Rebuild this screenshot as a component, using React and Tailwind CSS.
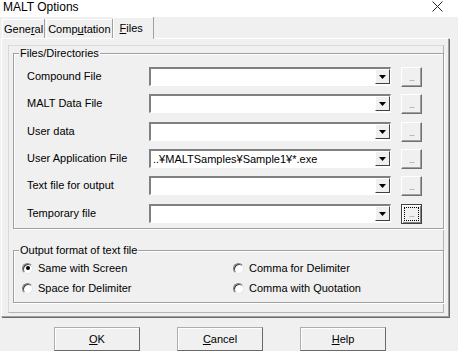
import React from 'react';

const FONT = { fontFamily: '"Liberation Sans", Arial, sans-serif' };

const ROWS = [
    { label: 'Compound File', value: '', mt: 'mt-0' },
    { label: 'MALT Data File', value: '', mt: 'mt-[8px]' },
    { label: 'User data', value: '', mt: 'mt-[9px]' },
    { label: 'User Application File', value: '..¥MALTSamples¥Sample1¥*.exe', mt: 'mt-[8px]' },
    { label: 'Text file for output', value: '', mt: 'mt-[8px]' },
    { label: 'Temporary file', value: '', mt: 'mt-[9px]', focus: true },
];

const Tab = ({ children, active, className = '' }) => (
    <div
        className={`relative flex items-center border-l border-t border-white shadow-[1px_0_0_#a0a0a0] ${
            active ? 'h-[22px] mb-[-1px] bg-[#f0f0f0] z-10 pl-[6px] pr-[10px]' : 'h-[19px] px-[1px]'
        } ${className}`}
    >
        {children}
    </div>
);

const Combo = ({ value }) => (
    <div className="w-[242px] h-[19px] flex border-t-2 border-l-2 border-t-[#808080] border-l-[#808080] border-b border-r border-b-white border-r-white bg-white">
        <div className="flex-1 pl-[2px] text-[11px] leading-[16px] text-black truncate">{value}</div>
        <div className="w-[15px] h-[15px] bg-[#f0f0f0] border-t border-l border-t-white border-l-white border-b border-r border-b-[#404040] border-r-[#404040] flex items-center justify-center">
            <svg width="7" height="4" viewBox="0 0 7 4"><path d="M0 0h7L3.5 4z" fill="#000" /></svg>
        </div>
    </div>
);

const Browse = ({ focus }) => (
    <div
        className={`w-[21px] h-[20px] flex items-center justify-center bg-[#f0f0f0] border ${
            focus ? 'border-[#404040] shadow-[inset_1px_1px_0_#fff,inset_-1px_-1px_0_#808080]' : 'border-t-white border-l-white border-b-[#707070] border-r-[#707070] shadow-[inset_-1px_-1px_0_#a0a0a0]'
        }`}
    >
        <div className={`w-[15px] h-[14px] flex items-end justify-center pb-[3px] ${focus ? 'border border-dotted border-black' : ''}`}>
            <span className="text-[8px] leading-[4px] text-[#666] tracking-[-0.5px]">...</span>
        </div>
    </div>
);

const Radio = ({ checked, label }) => (
    <div className="flex items-center h-[20px]">
        <div className="w-[11px] h-[11px] rounded-full bg-white border border-t-[#808080] border-l-[#808080] border-b-[#e8e8e8] border-r-[#e8e8e8] shadow-[inset_1px_1px_0_#404040] flex items-center justify-center">
            {checked && <div className="w-[4px] h-[4px] rounded-full bg-black" />}
        </div>
        <span className="ml-[5px] text-[11px] text-black">{label}</span>
    </div>
);

const Group = ({ title, className = '', children }) => (
    <div className={`relative border border-[#a0a0a0] shadow-[1px_1px_0_#fff,inset_1px_1px_0_#fff] ${className}`}>
        <span className="absolute left-[5px] top-[-8px] px-[1px] bg-[#f0f0f0] text-[11px] leading-[14px] text-black">{title}</span>
        {children}
    </div>
);

const DlgButton = ({ children }) => (
    <div className="w-[86px] h-[24px] flex items-center justify-center bg-[#f0f0f0] border border-[#adadad] border-r-[#696969] border-b-[#696969] shadow-[inset_1px_1px_0_#fff] text-[11px] text-black">
        {children}
    </div>
);

export default function App() {
    return (
        <div className="w-[458px] h-[351px] bg-[#f0f0f0] overflow-hidden select-none" style={FONT}>
            {/* Title */}
            <div className="h-[17px] bg-white flex items-start justify-between">
                <span className="pl-[3px] pt-[1px] text-[12px] leading-[13px] text-black">MALT Options</span>
                <svg className="mr-[15px] mt-[1px]" width="11" height="11" viewBox="0 0 11 11">
                    <path d="M0.5 0.5L10.5 10.5M10.5 0.5L0.5 10.5" stroke="#222" strokeWidth="1" />
                </svg>
            </div>

            {/* Tabs */}
            <div className="h-[21px] flex items-end pl-[2px] text-[11px] text-black">
                <Tab>Gene<u>r</u>al</Tab>
                <Tab className="ml-[2px]">Comp<u>u</u>tation</Tab>
                <Tab active className="ml-[1px]"><u>F</u>iles</Tab>
            </div>

            {/* Panel */}
            <div className="ml-[1px] w-[448px] h-[279px] border border-white border-r-[#a0a0a0] border-b-[#a0a0a0] shadow-[1px_1px_0_#696969]">
                <div className="ml-[6px] mt-[6px] w-[436px] h-[268px] border border-[#d9d9d9] border-r-[#b4b4b4] border-b-[#b4b4b4] pt-[7px] pl-[4px]">
                    <Group title="Files/Directories" className="w-[431px] h-[176px] pt-[13px] pl-[13px]">
                        {ROWS.map(r => (
                            <div key={r.label} className={`flex items-center h-[19px] ${r.mt}`}>
                                <span className="w-[122px] text-[11px] text-black">{r.label}</span>
                                <Combo value={r.value} />
                                <div className="ml-[10px]"><Browse focus={r.focus} /></div>
                            </div>
                        ))}
                    </Group>

                    <Group title="Output format of text file" className="mt-[21px] w-[431px] h-[53px] pt-[7px] pl-[8px]">
                        <div className="grid grid-cols-[211px_1fr]">
                            <Radio checked label="Same with Screen" />
                            <Radio label="Comma for Delimiter" />
                            <Radio label="Space for Delimiter" />
                            <Radio label="Comma with Quotation" />
                        </div>
                    </Group>
                </div>
            </div>

            {/* Buttons */}
            <div className="mt-[10px] flex pl-[54px] gap-[37px]">
                <DlgButton><u>O</u>K</DlgButton>
                <DlgButton><u>C</u>ancel</DlgButton>
                <DlgButton><u>H</u>elp</DlgButton>
            </div>
        </div>
    );
}
